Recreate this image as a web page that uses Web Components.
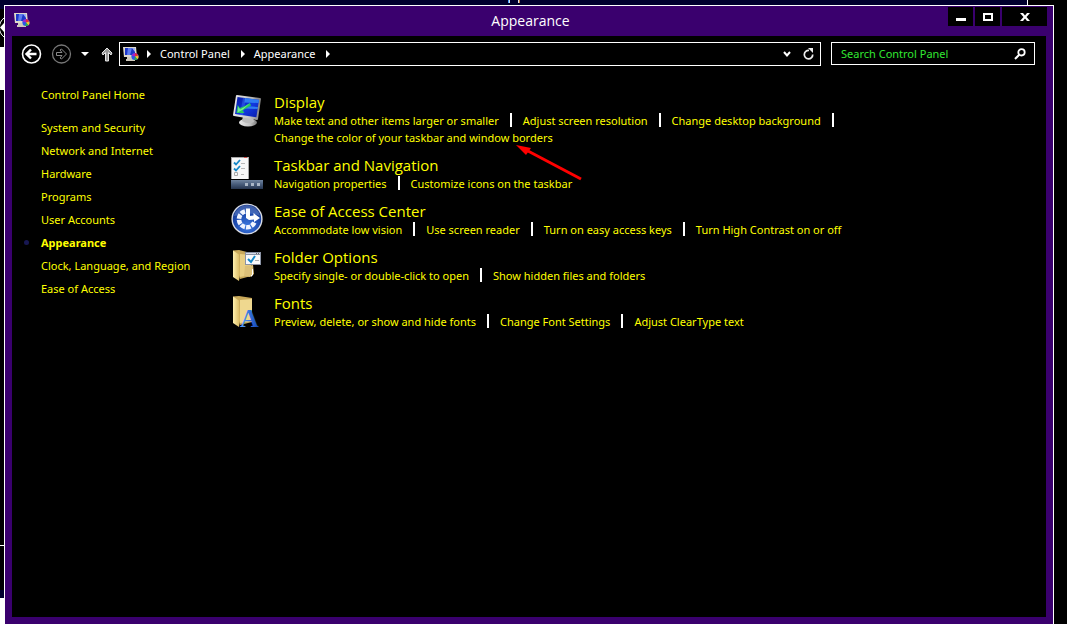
<!DOCTYPE html>
<html lang="en">
<head>
<meta charset="utf-8">
<title>Appearance</title>
<style>
  html, body { margin: 0; height: 100%; background: #000; }
  body {
    font: 11px/17px "Noto Sans", "Open Sans", sans-serif;
    color: #fff;
    overflow: hidden;
    --link: #ff0;
    --frame: #3a006e;
  }
</style>
</head>
<body>
<cp-desktop>
  <cp-window caption="Appearance">
    <cp-navbar slot="bar"></cp-navbar>
    <cp-sidebar slot="side">
      <cp-side-link home>Control Panel Home</cp-side-link>
      <cp-side-link>System and Security</cp-side-link>
      <cp-side-link>Network and Internet</cp-side-link>
      <cp-side-link>Hardware</cp-side-link>
      <cp-side-link>Programs</cp-side-link>
      <cp-side-link>User Accounts</cp-side-link>
      <cp-side-link current>Appearance</cp-side-link>
      <cp-side-link>Clock, Language, and Region</cp-side-link>
      <cp-side-link>Ease of Access</cp-side-link>
    </cp-sidebar>
    <cp-category heading="Display" icon="display">
      <cp-link>Make text and other items larger or smaller</cp-link>
      <cp-link>Adjust screen resolution</cp-link>
      <cp-link>Change desktop background</cp-link>
      <cp-link marked>Change the color of your taskbar and window borders</cp-link>
    </cp-category>
    <cp-category heading="Taskbar and Navigation" icon="taskbar">
      <cp-link>Navigation properties</cp-link>
      <cp-link>Customize icons on the taskbar</cp-link>
    </cp-category>
    <cp-category heading="Ease of Access Center" icon="ease">
      <cp-link>Accommodate low vision</cp-link>
      <cp-link>Use screen reader</cp-link>
      <cp-link>Turn on easy access keys</cp-link>
      <cp-link>Turn High Contrast on or off</cp-link>
    </cp-category>
    <cp-category heading="Folder Options" icon="folder">
      <cp-link>Specify single- or double-click to open</cp-link>
      <cp-link>Show hidden files and folders</cp-link>
    </cp-category>
    <cp-category heading="Fonts" icon="fonts">
      <cp-link>Preview, delete, or show and hide fonts</cp-link>
      <cp-link>Change Font Settings</cp-link>
      <cp-link>Adjust ClearType text</cp-link>
    </cp-category>
  </cp-window>
</cp-desktop>

<script>
const ICONS = {
  panel: `<svg viewBox="0 0 16 14" width="16" height="14" aria-hidden="true">
    <path d="M0 0h13l1 10H1z" fill="#ddd8cc"/><path d="M2 1h10v7H2z" fill="#1c36c8"/>
    <path d="M5 1h4l-2 7H4z" fill="#5d7df0"/><path d="M9 1h3v4z" fill="#9db0f4"/>
    <path d="M4 10h6v2h2v2H3v-2h1z" fill="#cfc9bb"/>
    <circle cx="12" cy="9.5" r="3.6" fill="#2b56e8"/>
    <path d="M12 9.500V5.900A3.600 3.600 0 0 0 8.600 8.500z" fill="#a324c8"/>
    <path d="M12 9.500V5.900A3.600 3.600 0 0 1 15.400 8.500z" fill="#e8283a"/>
    <path d="M12 9.500l3.400-1a3.600 3.600 0 0 1-1.100 3.700z" fill="#f3c82a"/>
    <path d="M12 9.500l2.300 2.700a3.600 3.600 0 0 1-3 .8z" fill="#2bb14c"/></svg>`,
  display: `<svg viewBox="0 0 32 34" width="32" height="34" aria-hidden="true">
    <defs><linearGradient id="s" x1="0" y1="0" x2="1" y2="1"><stop offset="0" stop-color="#0718a0"/><stop offset=".55" stop-color="#1238e0"/><stop offset="1" stop-color="#0a1da8"/></linearGradient>
    <linearGradient id="b" x1="0" x2="1"><stop offset="0" stop-color="#e9e9e9"/><stop offset=".6" stop-color="#c4c4c4"/><stop offset="1" stop-color="#7c7c7c"/></linearGradient></defs>
    <ellipse cx="17" cy="28.500" rx="9" ry="4" fill="url(#b)"/><path d="M12 22l10 1 1 5q-6 3-12-1z" fill="#bbb"/>
    <path d="M5 1.500Q5 1 6 1l23 3q1 0 1 1l-3 20q0 1-1 1L3 22q-1 0-1-1z" fill="url(#b)"/>
    <path d="M6.500 3L28 5.800 25.400 23.300 4 20z" fill="url(#s)"/>
    <path d="M14 4l14 2-.5 3-14-.5zM14 12l13 1-.4 2-14-.5z" fill="#2e7cf2"/>
    <path d="M12 3.800l3 .4-3 17-3-.4z" fill="#4c83ff" opacity=".35"/>
    <path d="M19 9l1 2.500-8.500 5 2 2.500L5.500 19l1.200-8 2 3Q14 12.500 19 9z" fill="#27c862"/>
    <path d="M19 9l-7 6.500-5.500 3L7.500 12.500l1.500 3Q14 13 19 9z" fill="#77ee93"/></svg>`,
  taskbar: `<svg viewBox="0 0 32 32" width="32" height="32" aria-hidden="true">
    <defs><linearGradient id="t" x1="0" y1="0" x2="0" y2="1"><stop offset="0" stop-color="#70849f"/><stop offset=".5" stop-color="#465a78"/><stop offset="1" stop-color="#26354f"/></linearGradient></defs>
    <path d="M0 0h18v22H0z" fill="#a6a6a6"/><path d="M1 1h16v21H1z" fill="#f7f7f7"/><path d="M13 0h3v1h-3z" fill="#d0504a"/>
    <path d="M3 5.500l2 2 4-4.500M3 11.500l2 2 4-4.500" fill="none" stroke="#1688c8" stroke-width="1.800"/>
    <path d="M3.500 15.500h3v3h-3z" fill="none" stroke="#aaa"/><path d="M10 6.500h4M10 11.500h4M10 17.500h3" stroke="#b8b8b8"/>
    <path d="M0 23h32v9H0z" fill="url(#t)"/><path d="M14 26h3v3h-3zM20 26h3v3h-3zM26 26h3v3h-3z" fill="#aab6c6"/></svg>`,
  ease: `<svg viewBox="0 0 32 32" width="32" height="32" aria-hidden="true">
    <defs><radialGradient id="e" cx=".5" cy=".75" r=".75"><stop offset="0" stop-color="#3d7ae0"/><stop offset=".6" stop-color="#1c48ad"/><stop offset="1" stop-color="#123080"/></radialGradient></defs>
    <circle cx="16" cy="16" r="15.600" fill="#d9dde6"/><circle cx="16" cy="16" r="14.200" fill="url(#e)"/>
    <path d="M3 13A13.200 13.200 0 0 1 29 13Q20 8 3 13z" fill="#8eaee8" opacity=".35"/>
    <path d="M14 8.500A8 8 0 1 0 23.500 19" fill="none" stroke="#f1f5ff" stroke-width="4.600" stroke-dasharray="4.400 1.100"/>
    <path d="M15 5.500h4V13l3.500-.5V10l6.500 5-6 4v-2.500l-5 .5-3-2z" fill="#fff"/></svg>`,
  folder: `<svg viewBox="0 0 32 34" width="32" height="34" aria-hidden="true">
    <defs><linearGradient id="f" x1="0" x2="1"><stop offset="0" stop-color="#fff0ae"/><stop offset="1" stop-color="#d7b65e"/></linearGradient></defs>
    <path d="M2 1.500l6-.5 12 3v23l-11 3z" fill="#c9a95a"/><path d="M9 5l11 1v20l-11 2z" fill="#e9cf83"/><path d="M14 17l8-1 1 9-4 3-6-1z" fill="#dcc078"/>
    <path d="M2 1.500l6 4 1 20-1 6.500-6-4z" fill="url(#f)"/><path d="M21 20h1v6l-2 2v-2h1z" fill="#fff"/>
    <path d="M14 3h16v13H14z" fill="#8b93a5"/><path d="M15 6h14v9H15z" fill="#fafafa"/><path d="M15 4h14v1H15z" fill="#d8deea"/><path d="M25 4h1v1h-1zM27 4h1v1h-1z" fill="#666"/>
    <path d="M17 10l3 3 4-6" fill="none" stroke="#1688c8" stroke-width="2"/><path d="M24 11.500h4" stroke="#aaa"/></svg>`,
  fonts: `<svg viewBox="0 0 32 34" width="32" height="34" aria-hidden="true">
    <defs><linearGradient id="f" x1="0" x2="1"><stop offset="0" stop-color="#fff0ae"/><stop offset="1" stop-color="#d7b65e"/></linearGradient>
    <linearGradient id="a" x1="0" x2="1"><stop offset="0" stop-color="#5ca6ff"/><stop offset="1" stop-color="#1140b0"/></linearGradient></defs>
    <path d="M2 1.500l6-.5 13 2v24l-12 3z" fill="#c9a95a"/><path d="M9 5l12-1v22l-12 2z" fill="#efd88f"/>
    <path d="M2 1.500l6 4 1 20-1 6.500-6-4z" fill="url(#f)"/>
    <text x="9" y="32" font-family="Liberation Serif" font-weight="700" font-size="26" fill="url(#a)">A</text></svg>`
};

function define(name, css, html, setup) {
  const template = document.createElement('template');
  customElements.define(name, class extends HTMLElement {
    constructor() {
      super();
      template.innerHTML = `<style>:host,*{box-sizing:border-box}svg{display:block;overflow:visible}${css}</style>${html}`;
      this.attachShadow({ mode: 'open' }).append(template.content.cloneNode(true));
      if (setup) setup(this, this.shadowRoot);
    }
  });
}

define('cp-desktop', `
  :host { display: grid; grid-template: 5px minmax(0, 1fr) / 4px minmax(0, 1fr) 13px; height: 100vh; background: #000; }
  .top { grid-column: 1 / 4; margin-right: 39px; background: #00002e; border-right: 1px solid #fff; }
  .top svg { margin: 0 auto; }
  .left { display: flex; flex-direction: column; overflow: hidden; }
  .left svg { flex: none; overflow: hidden; }
  .left i { display: block; flex: none; }
  .navy { height: 4px; background: #00002e; }
  .light { height: 43px; background: #fff; }
  .rule { height: 1px; background: #fff; }
  .left .gap { flex: 1; }
  .low { height: 44px; } .foot { height: 26px; background: #fff; }
`, `
  <div class="top"><svg width="12" height="3" viewBox="0 0 12 3" aria-hidden="true"><path d="M0 0h1v3H0z" fill="#48a0ff"/><path d="M1 0h1v3H1zM10 0h1v3h-1z" fill="#d9e3ec"/><path d="M11 0h1v3h-1z" fill="#c47a38"/></svg></div>
  <div class="left"><i class="navy"></i>
    <svg width="4" height="38" viewBox="0 0 4 38" aria-hidden="true"><path d="M4 9A12 12 0 0 0 4 28" fill="none" stroke="#fff"/><path d="M4 14L0 18.500 4 23z" fill="#fff"/></svg>
    <i class="light"></i><i class="gap"></i><i class="rule"></i><i class="low"></i><i class="navy"></i><i class="navy"></i><i class="foot"></i></div>
  <slot></slot>`);

define('cp-window', `
  :host { display: flex; flex-direction: column; min-width: 0; background: var(--frame); border: solid #fff; border-width: 1px 1px 0; }
  header { display: grid; grid-template-columns: 1fr auto 1fr; height: 30px; padding: 0 6px 0 9px; }
  header svg { margin-top: 7px; }
  h1 { margin: 0; font: 14px/30px "Open Sans", sans-serif; }
  .buttons { display: flex; justify-content: flex-end; gap: 2px; padding-top: 1px; }
  button { width: 25px; height: 19px; padding: 0; border: 0; background: #000; display: grid; place-items: center; }
  button.close { width: 45px; }
  .buttons svg { margin: 0; }
  .client { flex: 1; min-height: 0; margin: 0 7px 7px; background: #000; display: flex; flex-direction: column; }
  .body { display: flex; }
  main { flex: 1; min-width: 0; display: flex; flex-direction: column; gap: 9px; padding: 20px 0 0; }
`, `
  <header>${ICONS.panel}<h1></h1>
    <div class="buttons">
      <button aria-label="Minimize"><svg width="10" height="8" viewBox="0 0 10 8"><path d="M0 5h10v3H0z" fill="#fff"/></svg></button>
      <button aria-label="Maximize"><svg width="10" height="8" viewBox="0 0 10 8"><path d="M0 0h10v8H0zM2 2v4h6V2z" fill="#fff" fill-rule="evenodd"/></svg></button>
      <button class="close" aria-label="Close"><svg width="10" height="8" viewBox="0 0 10 8"><path d="M0 0h3l2 2.500L7 0h3L6.500 4 10 8H7L5 5.500 3 8H0l3.500-4z" fill="#fff"/></svg></button>
    </div></header>
  <div class="client"><slot name="bar"></slot><div class="body"><slot name="side"></slot><main><slot></slot></main></div></div>`,
  (el, root) => { root.querySelector('h1').textContent = el.getAttribute('caption'); });

define('cp-navbar', `
  :host { display: flex; align-items: center; height: 36px; padding: 0 11px 0 9px; }
  button { padding: 0; border: 0; background: none; color: inherit; font: inherit; flex: none; }
  .fwd { margin-left: 9px; } .hist { margin-left: 9px; } .up { margin: 0 6px 0 12px; }
  .address { flex: 1; height: 24px; border: 1px solid #fff; display: flex; align-items: center; padding: 0 6px 0 3px; }
  .address .tri { margin: 0 9px 0 8px; }
  .address a { margin-right: 3px; color: #fff; text-decoration: none; white-space: nowrap; line-height: 16px; padding-bottom: 1px; }
  .address .drop { margin-left: auto; margin-right: 12px; }
  form { flex: none; width: 204px; height: 23px; margin: 6px 0 0 10px; align-self: flex-start; border: 1px solid #fff; display: flex; align-items: center; padding: 0 8px 0 9px; }
  input { flex: 1; min-width: 0; height: 21px; padding: 0; border: 0; outline: 0; background: none; color: #3f3; font: inherit; }
  input::placeholder { color: #32e632; opacity: 1; }
`, `
  <button aria-label="Back"><svg width="21" height="20" viewBox="0 0 21 20"><circle cx="10.500" cy="10" r="9" fill="none" stroke="#fff" stroke-width="1.600"/><path d="M15.500 10H6M10 5.500L5.500 10l4.500 4.500" fill="none" stroke="#fff" stroke-width="2.400"/></svg></button>
  <button class="fwd" aria-label="Forward"><svg width="21" height="20" viewBox="0 0 21 20"><circle cx="10.500" cy="10" r="9" fill="none" stroke="#777" stroke-width="1.300"/><path d="M5.500 8.500h5.500L9 6l1.500-1L15.500 10l-5 5L9 14l2-2.500H5.500z" fill="none" stroke="#888"/></svg></button>
  <button class="hist" aria-label="Recent locations"><svg width="8" height="4" viewBox="0 0 8 4"><path d="M0 0h8L4 4z" fill="#fff"/></svg></button>
  <button class="up" aria-label="Up"><svg width="12" height="15" viewBox="0 0 12 15"><path d="M6 1l5 5-1 2-2.500-2.500V14h-3V5.500L2 8 1 6z" fill="#999" stroke="#e6e6e6"/></svg></button>
  <div class="address"><span>${ICONS.panel}</span>
    <svg class="tri" width="4" height="8" viewBox="0 0 4 8"><path d="M0 0l4 4-4 4z" fill="#fff"/></svg><a href="#">Control Panel</a>
    <svg class="tri" width="4" height="8" viewBox="0 0 4 8"><path d="M0 0l4 4-4 4z" fill="#fff"/></svg><a href="#">Appearance</a>
    <svg class="tri" width="4" height="8" viewBox="0 0 4 8"><path d="M0 0l4 4-4 4z" fill="#fff"/></svg>
    <button class="drop" aria-label="Previous locations"><svg width="8" height="6" viewBox="0 0 8 6"><path d="M1 1l3 3.500L7 1" fill="none" stroke="#fff" stroke-width="2"/></svg></button>
    <button aria-label="Refresh"><svg width="11" height="12" viewBox="0 0 11 12"><path d="M6 2.500A4.200 4.200 0 1 0 9.700 6.500" fill="none" stroke="#eee" stroke-width="1.700"/><path d="M5 0h5v5z" fill="#eee"/></svg></button></div>
  <form><input type="text" aria-label="Search Control Panel" placeholder="Search Control Panel"><svg width="12" height="12" viewBox="0 0 12 12" aria-hidden="true"><circle cx="7.500" cy="4.300" r="3.200" fill="none" stroke="#fff" stroke-width="1.800"/><path d="M5 7L1 11" stroke="#fff" stroke-width="2"/></svg></form>`);

define('cp-sidebar', `
  :host { display: block; flex: none; width: 219px; padding: 11px 0 0 12px; }
`, `<nav aria-label="Control Panel"><slot></slot></nav>`);

define('cp-side-link', `
  :host { display: flex; align-items: center; height: 23px; }
  :host([home]) { margin-bottom: 10px; }
  i { width: 5px; height: 5px; margin-right: 12px; border-radius: 50%; }
  :host([current]) i { background: #171752; }
  :host([current]) a { font-weight: 700; }
  a { color: var(--link); text-decoration: none; white-space: nowrap; }
`, `<i></i><a href="#"><slot></slot></a>`);

define('cp-category', `
  :host { display: flex; gap: 11px; }
  .icon { flex: none; width: 32px; padding-top: 2px; }
  h2 { margin: 0; font: 15px/20px "Open Sans", sans-serif; }
  h2 a { color: var(--link); text-decoration: none; }
  .links { display: flex; flex-wrap: wrap; }
`, `<div class="icon"></div><section><h2><a href="#"></a></h2><div class="links"><slot></slot></div></section>`,
  (el, root) => {
    root.querySelector('.icon').innerHTML = ICONS[el.getAttribute('icon')];
    root.querySelector('h2 a').textContent = el.getAttribute('heading');
  });

define('cp-link', `
  :host { display: flex; position: relative; }
  :host(:not(:last-of-type))::after { content: ""; width: 2px; height: 14px; margin: 1px 11px 0; background: #fff; }
  a { color: var(--link); text-decoration: none; white-space: nowrap; }
  svg { display: none; }
  :host([marked]) svg { display: block; position: absolute; left: 241px; top: 15px; z-index: 1; }
`, `<a href="#"><slot></slot></a>
  <svg width="70" height="38" viewBox="0 0 70 38" aria-hidden="true"><path d="M13 7L66 35" stroke="#f00" stroke-width="3"/><path d="M1 1l15 3-5 7z" fill="#f00"/></svg>`);
</script>
</body>
</html>
